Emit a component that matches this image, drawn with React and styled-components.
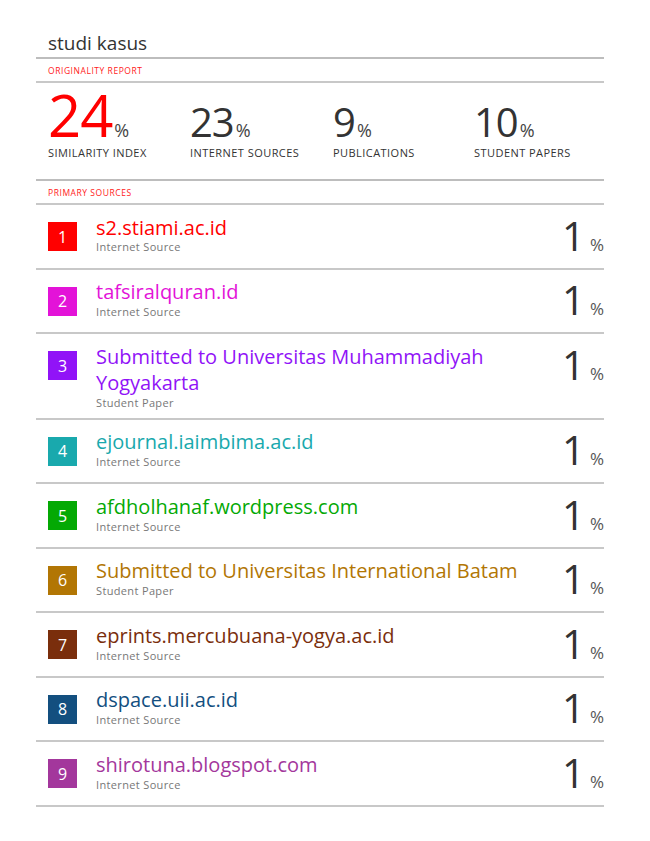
import React from 'react';
import styled, { createGlobalStyle } from 'styled-components';

const GlobalStyle = createGlobalStyle`
  body {
    margin: 0;
    background: #fff;
    font-family: "Open Sans", "Noto Sans", "Liberation Sans", sans-serif;
  }
`;

const Page = styled.div`
  width: 568px;
  margin-left: 36px;
  padding-top: 31px;
`;

const Title = styled.div`
  font-size: 19px;
  line-height: 24px;
  color: #333;
  padding: 0 12px 2px;
  border-bottom: 2px solid #bdbdbd;
`;

const SectionLabel = styled.div`
  font-size: 8.5px;
  line-height: 11px;
  letter-spacing: 0.55px;
  color: #ff1a1a;
  padding: 6px 12px 5px;
  border-bottom: 2px solid #c8c8c8;
`;

const Stats = styled.div`
  display: grid;
  grid-template-columns: 142px 143px 141px 1fr;
  padding: 2.5px 12px 19.5px;
  border-bottom: 2px solid #bdbdbd;
`;

const Stat = styled.div`
  display: flex;
  flex-direction: column;
`;

const Figure = styled.div`
  height: 58px;
  font-size: 58px;
  line-height: 58px;
  white-space: nowrap;
  color: ${(props) => (props.red ? '#ff0000' : '#333')};
`;

const Number = styled.span`
  font-size: ${(props) => (props.big ? 58 : 40)}px;
  line-height: 1;
  letter-spacing: -1px;
`;

const Pct = styled.span`
  font-size: 18px;
  line-height: 1;
  color: #444;
  margin-left: 2px;
`;

const StatLabel = styled.div`
  font-size: 11px;
  line-height: 14px;
  letter-spacing: 0.45px;
  color: #333;
  margin-top: 2px;
`;

const List = styled.div`
  display: flex;
  flex-direction: column;
`;

const Row = styled.div`
  display: flex;
  align-items: flex-start;
  padding: 9.5px 0 7px 12px;
  border-bottom: 2px solid #c8c8c8;
`;

const Badge = styled.div`
  flex: none;
  width: 29px;
  height: 29px;
  background: ${(props) => props.color};
  color: #fff;
  font-size: 16px;
  display: flex;
  align-items: center;
  justify-content: center;
  margin-right: 19px;
  margin-top: 7.5px;
`;

const Info = styled.div`
  flex: 1;
  display: flex;
  flex-direction: column;
`;

const SourceName = styled.div`
  font-size: 20px;
  line-height: 26.5px;
  color: ${(props) => props.color};
  max-width: 440px;
`;

const SourceType = styled.div`
  font-size: 11px;
  line-height: 16px;
  letter-spacing: 0.35px;
  color: #777;
  margin-top: -1.6px;
`;

const Share = styled.div`
  flex: none;
  display: flex;
  align-items: baseline;
  color: #333;
  height: 43px;
  padding-top: 3px;
`;

const ShareNum = styled.span`
  font-size: 40px;
  line-height: 36px;
`;

const SharePct = styled.span`
  font-size: 17px;
  color: #555;
  margin-left: 5px;
`;

const stats = [
  { value: '24', label: 'SIMILARITY INDEX', big: true },
  { value: '23', label: 'INTERNET SOURCES' },
  { value: '9', label: 'PUBLICATIONS' },
  { value: '10', label: 'STUDENT PAPERS' },
];

const sources = [
  { name: 's2.stiami.ac.id', type: 'Internet Source', color: '#ff0000' },
  { name: 'tafsiralquran.id', type: 'Internet Source', color: '#e313d8' },
  { name: 'Submitted to Universitas Muhammadiyah Yogyakarta', type: 'Student Paper', color: '#9113f7' },
  { name: 'ejournal.iaimbima.ac.id', type: 'Internet Source', color: '#19a9ad' },
  { name: 'afdholhanaf.wordpress.com', type: 'Internet Source', color: '#04a904' },
  { name: 'Submitted to Universitas International Batam', type: 'Student Paper', color: '#b27604' },
  { name: 'eprints.mercubuana-yogya.ac.id', type: 'Internet Source', color: '#7a2e0c' },
  { name: 'dspace.uii.ac.id', type: 'Internet Source', color: '#134f7f' },
  { name: 'shirotuna.blogspot.com', type: 'Internet Source', color: '#a3379c' },
];

export default function App() {
  return (
    <Page>
      <GlobalStyle />
      <Title>studi kasus</Title>
      <SectionLabel>ORIGINALITY REPORT</SectionLabel>
      <Stats>
        {stats.map((s) => (
          <Stat key={s.label}>
            <Figure red={s.big}>
              <Number big={s.big}>{s.value}</Number>
              <Pct>%</Pct>
            </Figure>
            <StatLabel>{s.label}</StatLabel>
          </Stat>
        ))}
      </Stats>
      <SectionLabel>PRIMARY SOURCES</SectionLabel>
      <List>
        {sources.map((s, i) => (
          <Row key={s.name}>
            <Badge color={s.color}>{i + 1}</Badge>
            <Info>
              <SourceName color={s.color}>{s.name}</SourceName>
              <SourceType>{s.type}</SourceType>
            </Info>
            <Share>
              <ShareNum>1</ShareNum>
              <SharePct>%</SharePct>
            </Share>
          </Row>
        ))}
      </List>
    </Page>
  );
}
